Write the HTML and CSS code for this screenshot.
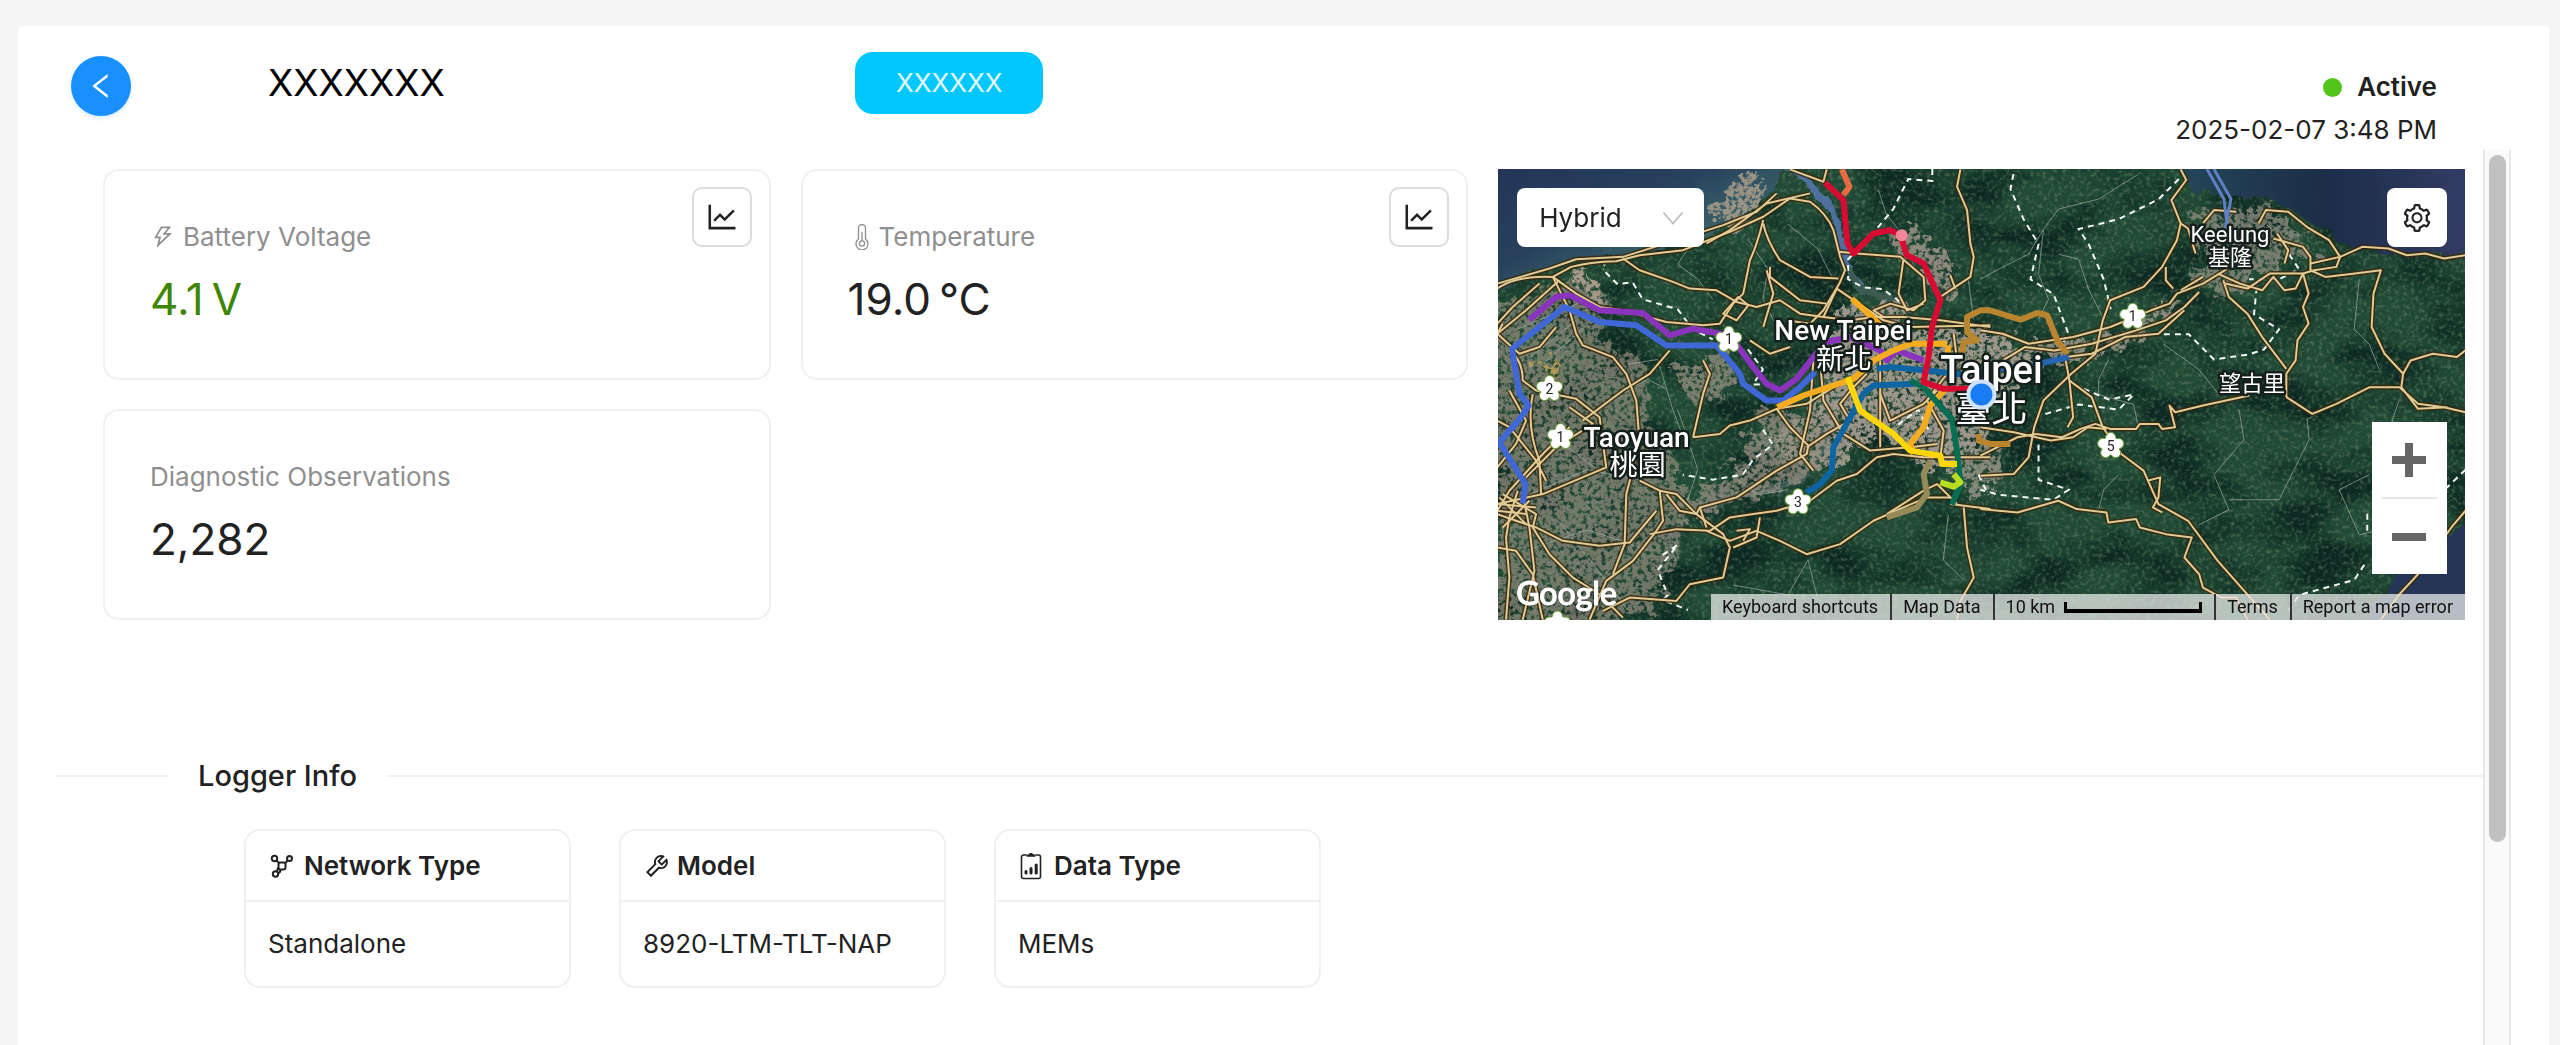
FILE: index.html
```html
<!DOCTYPE html>
<html lang="en">
<head>
<meta charset="utf-8">
<meta name="viewport" content="width=device-width, initial-scale=1">
<title>Logger details</title>
<link rel="stylesheet" href="styles.css">
</head>
<body>
<svg class="sprite" aria-hidden="true">
  <symbol id="i-left" viewBox="0 0 1024 1024"><path d="M724 218.3V141c0-6.7-7.7-10.4-12.9-6.3L260.3 486.8a31.86 31.86 0 000 50.3l450.8 352.1c5.3 4.1 12.9.4 12.9-6.3v-77.3c0-4.9-2.3-9.6-6.1-12.6l-360-281 360-281.1c3.8-3 6.1-7.7 6.1-12.6z"/></symbol>
  <symbol id="i-chart" viewBox="0 0 1024 1024"><path d="M888 792H200V168c0-4.4-3.6-8-8-8h-56c-4.4 0-8 3.6-8 8v688c0 4.4 3.6 8 8 8h752c4.4 0 8-3.6 8-8v-56c0-4.4-3.6-8-8-8zM305.8 637.7c3.1 3.1 8.1 3.1 11.3 0l138.3-137.6L583 628.5c3.1 3.1 8.2 3.1 11.3 0l275.4-275.3c3.1-3.1 3.1-8.2 0-11.3l-39.6-39.6a8.03 8.03 0 00-11.3 0l-230 229.9L461.4 404a8.03 8.03 0 00-11.3 0L266.3 586.7a8.03 8.03 0 000 11.3l39.5 39.7z"/></symbol>
  <symbol id="i-bolt" viewBox="0 0 1024 1024"><path d="M848 359.3H627.7L825.8 109c4.1-5.3.4-13-6.3-13H436c-2.8 0-5.5 1.5-6.9 4L170 547.5c-3.1 5.3.7 12 6.9 12h174.4l-89.4 357.6c-1.9 7.8 7.5 13.3 13.3 7.7L853.5 373c5.2-4.9 1.7-13.7-5.5-13.7zM378.2 732.5l60.3-241H281.1l189.6-327.4h224.6L487 427.4h211L378.2 732.5z"/></symbol>
  <symbol id="i-thermo" viewBox="0 0 16 26"><g fill="none" stroke="currentColor" stroke-width="1.3"><path d="M4.500 15V4a3.500 3.500 0 0 1 7 0v11a6 6 0 1 1-7 0z"/><circle cx="8" cy="19.500" r="2.600"/><path d="M8 17V8"/></g></symbol>
  <symbol id="i-gear" viewBox="0 0 1024 1024"><path d="M924.8 625.7l-65.5-56c3.1-19 4.700-38.400 4.700-57.800s-1.600-38.800-4.700-57.800l65.500-56a32.030 32.030 0 009.300-35.200l-.9-2.600a443.740 443.740 0 00-79.700-137.900l-1.800-2.100a32.120 32.120 0 00-35.100-9.500l-81.300 28.900c-30-24.600-63.500-44-99.700-57.600l-15.700-85a32.050 32.050 0 00-25.800-25.700l-2.700-.5c-52.100-9.400-106.900-9.400-159 0l-2.700.5a32.050 32.050 0 00-25.800 25.700l-15.800 85.400a351.860 351.860 0 00-99 57.400l-81.900-29.100a32 32 0 00-35.100 9.500l-1.800 2.100a446.020 446.020 0 00-79.700 137.900l-.9 2.600c-4.500 12.500-.8 26.500 9.300 35.200l66.300 56.600c-3.100 18.800-4.600 38-4.600 57.100 0 19.200 1.500 38.400 4.600 57.100L99 625.500a32.030 32.030 0 00-9.300 35.200l.9 2.600c18.100 50.400 44.900 96.900 79.700 137.900l1.800 2.100a32.120 32.120 0 0035.100 9.500l81.900-29.100c29.800 24.500 63.100 43.900 99 57.400l15.800 85.400a32.050 32.050 0 0025.800 25.700l2.700.5a449.400 449.400 0 00159 0l2.700-.5a32.050 32.050 0 0025.800-25.700l15.700-85a350 350 0 0099.700-57.600l81.300 28.900a32 32 0 0035.100-9.500l1.800-2.100c34.800-41.100 61.600-87.500 79.700-137.900l.9-2.600c4.500-12.300.8-26.300-9.300-35zM788.300 465.900c2.500 15.100 3.800 30.600 3.800 46.100s-1.300 31-3.800 46.100l-6.600 40.100 74.700 63.900a370.030 370.030 0 01-42.600 73.600L721 702.800l-31.400 25.800c-23.900 19.600-50.500 35-79.300 45.800l-38.100 14.300-17.900 97a377.500 377.500 0 01-85 0l-17.900-97.200-37.800-14.500c-28.500-10.800-55-26.200-78.700-45.700l-31.400-25.900-93.400 33.200c-17-22.900-31.200-47.600-42.600-73.600l75.500-64.500-6.500-40c-2.400-14.900-3.700-30.300-3.700-45.500 0-15.300 1.200-30.600 3.700-45.500l6.500-40-75.500-64.500c11.300-26.100 25.600-50.700 42.600-73.600l93.400 33.200 31.400-25.900c23.700-19.500 50.200-34.900 78.700-45.700l37.900-14.300 17.900-97.200c28.100-3.200 56.800-3.200 85 0l17.900 97 38.100 14.300c28.700 10.800 55.400 26.200 79.300 45.800l31.400 25.800 92.800-32.900c17 22.900 31.200 47.600 42.600 73.600L781.800 426l6.500 39.900zM512 326c-97.200 0-176 78.800-176 176s78.800 176 176 176 176-78.800 176-176-78.800-176-176-176zm79.200 255.200A111.600 111.600 0 01512 614c-29.900 0-58-11.700-79.200-32.800A111.600 111.600 0 01400 502c0-29.900 11.700-58 32.800-79.200C454 401.600 482.100 390 512 390c29.900 0 58 11.600 79.200 32.800A111.600 111.600 0 01624 502c0 29.900-11.700 58-32.800 79.200z"/></symbol>
  <symbol id="i-tool" viewBox="0 0 1024 1024"><path d="M876.600 239.500c-.5-.9-1.200-1.800-2-2.500-5-5-13.100-5-18.100 0L684.200 409.300l-67.900-67.900L788.700 169c.8-.8 1.400-1.600 2-2.500 3.600-6.100 1.600-13.900-4.500-17.500-98.200-58-226.800-44.700-311.300 39.700-67 67-89.200 162-66.500 247.400l-293 293c-3 3-2.800 7.900.3 11l169.700 169.700c3.100 3.100 8.100 3.300 11 .3l292.900-292.900c85.500 22.800 180.500.7 247.600-66.400 84.400-84.500 97.700-213.100 39.700-311.300zM786 499.800c-58.100 58.100-145.300 69.300-214.600 33.600l-8.800 8.800-.1-.1-274 274.100-79.200-79.200 230.100-230.100s0 .1.1.1l52.800-52.800c-35.700-69.300-24.500-156.500 33.600-214.600a184.200 184.200 0 01144-53.500L537 318.900a32.050 32.050 0 000 45.300l124.500 124.500a32.050 32.050 0 0045.300 0l132.800-132.800c3.700 51.800-14.400 104.800-53.600 143.900z"/></symbol>
  <symbol id="i-network" viewBox="0 0 24 24"><g fill="none" stroke="currentColor" stroke-width="2"><circle cx="4.500" cy="4.500" r="2.700"/><circle cx="19.500" cy="4.500" r="2.500"/><circle cx="5.500" cy="20" r="2.700"/><rect x="8.500" y="8.500" width="7" height="7" rx="2"/><path d="M6.500 6.500l2.500 2.500M17.700 6.500l-2.400 2.700M10.500 15.500c0 2.500-1 3.500-3 3.500M7 17.500l1-4"/></g></symbol>
  <symbol id="i-data" viewBox="0 0 22 28"><path d="M6.500 3H3.500A2 2 0 0 0 1.500 5v19.500a2 2 0 0 0 2 2h15a2 2 0 0 0 2-2V5a2 2 0 0 0-2-2h-3" fill="none" stroke="currentColor" stroke-width="1.600"/><path d="M6.500 4.800V2.500h2C9 .4 13 .4 13.500 2.500h2v2.300z"/><path d="M6 21v-1.500M11 21v-4.500M16.200 21v-8" fill="none" stroke="currentColor" stroke-width="3" stroke-linecap="round"/></symbol>
  <symbol id="i-down" viewBox="0 0 22 14"><path d="M1.500 1.500L11 12.500l9.500-11" fill="none" stroke="currentColor" stroke-width="1.800"/></symbol>
</svg>

<main class="panel">
  <header class="header">
    <button class="back" type="button" aria-label="Back"><svg><use href="#i-left"/></svg></button>
    <h1 class="title">XXXXXXX</h1>
    <span class="tag">XXXXXX</span>
    <div class="status">
      <div class="state"><span class="dot"></span>Active</div>
      <time class="stamp" datetime="2025-02-07T15:48">2025-02-07 3:48 PM</time>
    </div>
  </header>

  <div class="scroller">
    <div class="content">
      <section class="overview">
        <article class="stat">
          <div class="stat-text">
            <h2 class="stat-label"><svg class="bolt"><use href="#i-bolt"/></svg>Battery Voltage</h2>
            <p class="stat-value good">4.1<span class="unit">V</span></p>
          </div>
          <button class="chart-btn" type="button" aria-label="Battery voltage chart"><svg><use href="#i-chart"/></svg></button>
        </article>
        <article class="stat">
          <div class="stat-text">
            <h2 class="stat-label"><svg class="thermo"><use href="#i-thermo"/></svg>Temperature</h2>
            <p class="stat-value">19.0<span class="unit">°C</span></p>
          </div>
          <button class="chart-btn" type="button" aria-label="Temperature chart"><svg><use href="#i-chart"/></svg></button>
        </article>
        <article class="stat observations">
          <div class="stat-text">
            <h2 class="stat-label">Diagnostic Observations</h2>
            <p class="stat-value">2,282</p>
          </div>
        </article>

        <section class="map" aria-label="Map">
          <svg class="tiles" viewBox="0 0 966 450" preserveAspectRatio="xMidYMid slice">
            <defs>
              <linearGradient id="seaWest" x1="0" y1="0" x2="1" y2="1"><stop offset="0" stop-color="#243358"/><stop offset=".4" stop-color="#27405c"/><stop offset=".7" stop-color="#3d6a6c"/><stop offset="1" stop-color="#47756f"/></linearGradient>
              <linearGradient id="seaEast" x1="0" y1="0" x2="1" y2="0"><stop offset="0" stop-color="#25485a"/><stop offset=".5" stop-color="#1c2d48"/><stop offset="1" stop-color="#343c66"/></linearGradient>
              <filter id="ragged" x="-5%" y="-5%" width="110%" height="110%" color-interpolation-filters="sRGB"><feTurbulence type="fractalNoise" baseFrequency=".06" numOctaves="4" seed="4" result="n"/><feDisplacementMap in="SourceGraphic" in2="n" xChannelSelector="R" yChannelSelector="G" scale="40" result="d"/><feTurbulence type="fractalNoise" baseFrequency=".22" numOctaves="4" seed="9"/><feColorMatrix values="0 0 0 0 1  0 0 0 0 1  0 0 0 0 1  0 5 0 0 -1.600" result="m"/><feComposite in="d" in2="m" operator="in"/></filter>
              <filter id="shade" x="0" y="0" width="100%" height="100%" color-interpolation-filters="sRGB"><feTurbulence type="fractalNoise" baseFrequency=".014 .024" numOctaves="5" seed="12"/><feColorMatrix values="0 0 0 0 .03  0 0 0 0 .14  0 0 0 0 .12  3 0 0 0 -1.200"/></filter>
              <filter id="grain" x="0" y="0" width="100%" height="100%" color-interpolation-filters="sRGB"><feTurbulence type="fractalNoise" baseFrequency=".25" numOctaves="3" seed="2"/><feColorMatrix values="0 0 0 0 .5  0 0 0 0 .58  0 0 0 0 .46  0 2.500 0 0 -1.200"/></filter>
              <filter id="coast" x="-5%" y="-5%" width="110%" height="110%" color-interpolation-filters="sRGB"><feTurbulence type="fractalNoise" baseFrequency=".05" numOctaves="3" seed="7" result="n"/><feDisplacementMap in="SourceGraphic" in2="n" xChannelSelector="R" yChannelSelector="G" scale="14"/></filter>
              <g id="shield"><g class="petals"><circle cy="-8" r="5"/><circle cx="8" cy="-2" r="5"/><circle cx="5" cy="7" r="5"/><circle cx="-5" cy="7" r="5"/><circle cx="-8" cy="-2" r="5"/></g><circle class="core" r="9"/></g>
              <!-- highways and main roads: west half, then east half -->
              <g id="roads">
                <g transform="translate(-8 -9) scale(.33333)">
                  <path d="M24 385Q80 345 190 350L245 320Q300 305 380 303L450 285L580 270L720 215L820 170L900 115L960 125Q1010 160 1030 210L1050 290L1065 330L1048 370L1000 450L960 490L890 480"/>
                  <path d="M24 370L180 325L260 297L400 290L560 240L700 195L800 155L860 100M900 28L1000 65L1010 28M650 250L720 210L830 130L960 100"/>
                  <path d="M400 295L450 330L550 365L600 385L680 390L740 425L800 440L870 420L930 460L1000 470L1080 480L1150 470"/>
                  <path d="M820 180Q800 260 780 300L760 400L730 430L690 490L640 495L530 485L400 450L330 440L260 400L190 350"/>
                  <path d="M820 190Q830 240 870 300L960 350L1045 355M840 320L840 350L930 420L1010 430M830 330L850 400L820 500"/>
                  <path d="M1048 275L1100 280L1230 290L1300 350L1305 420L1270 450L1200 430L1150 450L1180 470M1240 295L1225 400L1250 450L1300 430"/>
                  <path d="M1000 470L1040 385L1180 480L1260 500L1500 495M1130 470L1240 470L1350 480L1500 500"/>
                  <path d="M1410 28L1400 80L1430 150L1440 250L1450 290L1440 350L1350 410M1380 345L1395 385"/>
                  <path d="M24 490L70 440L150 370M24 520L110 450L210 360M40 490L24 520L90 580L150 560L200 500"/>
                  <path d="M190 350L240 450L260 520L280 555L370 590L410 640L440 720L450 850L410 1000L405 1150L370 1240"/>
                  <path d="M60 570Q100 600 100 660L140 690L260 715L330 770L350 920L160 1000L24 1030"/>
                  <path d="M130 700Q110 800 150 900L155 1000M24 920L80 850L110 780L60 690M24 780L60 800L140 900L170 960"/>
                  <path d="M280 780L400 690L480 640L540 570M240 740L310 790L200 860L110 950"/>
                  <path d="M240 800L160 880L60 990L24 1050M24 1060L80 1080L140 1100L220 1140L330 1155L420 1145L500 1050"/>
                  <path d="M40 1000L140 1060L130 1100L180 1180L250 1250L330 1300L400 1370"/>
                  <path d="M85 990L60 1070L50 1130L60 1250L50 1376M100 1000L120 1100L135 1230L100 1376M24 1160L80 1170L130 1240L160 1376"/>
                  <path d="M24 1030L140 1040M24 1050L110 1060M30 1010L110 1090M40 1100L120 1020"/>
                  <path d="M450 960L510 990L520 1080L500 1110L430 1200L350 1260L300 1376"/>
                  <path d="M610 830L690 820L720 795L780 780L860 745L950 730L1030 680L1085 650"/>
                  <path d="M860 745L900 800L955 855L950 880L860 930L740 1010L630 1040L620 1060L570 1050L530 1000"/>
                  <path d="M510 990L560 1000L620 1060L700 1120L720 1160L700 1250L600 1270L560 1320L420 1310L340 1350"/>
                  <path d="M480 1120L560 1105L660 1110L720 1070L860 1050L960 1020L1040 960L1100 940L1160 890L1210 880L1300 890L1500 890"/>
                  <path d="M650 1110L720 1140L800 1110L870 1140L950 1180L1050 1150L1150 1080L1240 1040L1310 1010L1380 1010"/>
                  <path d="M630 1040L650 1100M810 1070L800 1130L730 1160M740 1110L780 1105L760 1140"/>
                  <path d="M950 860L1010 820L1080 780L1050 730L1090 680L1130 640M970 600L960 750L930 880L970 930"/>
                  <path d="M990 600L1000 720L1060 820L1140 870L1260 860L1340 850M1170 700L1200 780L1300 730L1340 690"/>
                  <path d="M1390 520L1400 600L1310 720L1360 810L1350 890M1170 600L1170 860"/>
                  <path d="M1380 1030L1500 1045M1420 1040L1430 1160L1450 1250L1410 1320L1400 1376M1400 1030L1340 970L1300 990L1190 1060"/>
                  <path d="M640 600L660 640L640 700L610 830M780 540L840 580L900 560M700 460L745 410L775 435L740 480Z"/>
                </g>
                <g transform="translate(482 -9) scale(.37 .33333)">
                  <path d="M540 28L555 60L515 120L540 190L530 240L490 320L440 380L350 420L330 480L310 580L245 640L170 720L145 800L130 890L90 940L0 945"/>
                  <path d="M0 510L60 520L130 550L250 530L350 500L460 450L510 430L530 400L600 370L660 330L680 310"/>
                  <path d="M60 600L120 560L200 570L300 550L420 510L500 480L550 440L590 395M230 590L300 580L390 530L480 520L550 450"/>
                  <path d="M540 190L560 205L580 280M600 190L630 150L690 155M750 190L770 150L830 155L880 200L940 240L970 290L960 320L900 330L870 340L780 340L720 385L660 370"/>
                  <path d="M800 220L830 270L820 310M790 235L870 260L890 290L890 330L930 350L1010 340L1080 330L1060 400L1055 500L1090 580L1140 640L1135 680"/>
                  <path d="M890 310L970 290L1030 260L1100 265L1150 285L1200 280L1250 295L1308 285"/>
                  <path d="M640 340L700 370L760 390L790 350L820 390L850 385L870 340L885 400L870 440L885 490L855 540L850 600L825 640L825 710"/>
                  <path d="M655 360L670 410L720 460L760 530L825 625M500 320L500 360L520 385M540 390L600 350"/>
                  <path d="M825 710L895 760L960 730L1050 680L1130 680L1180 730L1250 740L1308 755M1140 640L1160 600L1220 580L1285 590L1308 570M1135 680L1180 745L1260 740"/>
                  <path d="M725 705L600 735L525 755L510 735L525 800L490 805L480 790L430 790L420 805L350 805L310 790L270 805L220 830L150 820M240 660L300 710L330 800L380 880L440 930L480 1030L560 1080L640 1200L780 1376"/>
                  <path d="M230 600L240 660L250 770L235 800M0 800L90 815L190 840L250 830L290 800L340 805M150 820L100 830L0 885"/>
                  <path d="M0 1045L100 1055L210 1020L260 1045L340 1055L345 1085L420 1075L430 1100L500 1120L570 1130L550 1190L590 1240L600 1280L650 1310L690 1310L720 1376"/>
                  <path d="M450 960L485 950L480 1010L465 1040L490 1055M1308 1050L1270 1100L1180 1240L1130 1300L1080 1376"/>
                </g>
              </g>
            </defs>

            <rect width="966" height="450" fill="#204a35"/>
            <rect width="966" height="450" filter="url(#shade)" opacity=".85"/>
            <rect width="966" height="450" filter="url(#grain)" opacity=".5"/>

            <g filter="url(#coast)">
              <path d="M-10-10H286L275 20L240 50L205 70L140 85L90 90L40 100L-10 125Z" fill="url(#seaWest)"/>
              <path d="M670-10H976V85L900 85L860 80L815 55L790 40L760 28L700 22Z" fill="url(#seaEast)"/>
              <path d="M976 350L915 378L900 400L880 430L860 460H976Z" fill="#243557"/>
              <path d="M280-6L305 6L330 28L340 55L350 75L352 100L368 118L395 128L365 124L346 105L338 60L312 22Z" fill="#4f6f9d"/>
              <path d="M345 95L360 118L390 128L410 140M345 150Q350 210 330 250L320 290L290 315L240 325L190 345" fill="none" stroke="#3d5b52" stroke-width="7"/>
            </g>

            <g filter="url(#ragged)">
              <path d="M0 135L70 110L110 120L100 170L150 195L150 260L175 290L190 330L180 390L150 440L100 460H0Z" fill="#8f8a7b" opacity=".75"/>
              <path d="M80 95L110 115L100 135L80 125Z" fill="#a69889"/>
              <path d="M170 200L230 180L240 210L200 240Z" fill="#9a9182" opacity=".75"/>
              <path d="M340 140L400 130L410 160L500 165L545 175L530 200L490 240L480 290L430 310L390 260L350 290L310 300L270 270L320 230Z" fill="#aaa093" opacity=".9"/>
              <path d="M400 55L430 65L455 95L450 130L425 110L400 85Z" fill="#a8998f" opacity=".8"/>
              <path d="M260 240L330 240L345 275L300 310L240 330L200 350L170 340L240 300Z" fill="#938c80" opacity=".8"/>
              <path d="M222 20L250 10L270 18L250 45L230 60L215 50Z" fill="#a59a87" opacity=".9"/>
              <path d="M540 175L620 165L660 140L680 120L665 155L610 180L560 195Z" fill="#9c9587" opacity=".9"/>
              <path d="M700 45L740 40L770 35L800 60L820 90L780 95L740 120L700 125Z" fill="#948f83" opacity=".75"/>
              <path d="M440 290L500 280L515 305L470 320Z" fill="#a0988c" opacity=".8"/>
              <path d="M35 190L60 190L55 205L35 200Z" fill="#b49a57"/>
            </g>

            <g class="minor">
              <path d="M180 60L190 80L180 95L200 110L215 130M250 70L270 100L265 130L280 160M290 55L320 80L335 110M380 20L388 45L400 60M470 110L475 150M20 160L90 130M30 190L80 150M45 195L90 155M130 195L160 190L175 240L190 280M110 230L150 210L170 220M60 270L100 300L130 300M20 330L90 300L140 310M30 380L90 360L150 380M60 350L100 400L130 440M180 240L200 300L190 330M235 415L290 425L310 390L320 430M450 345L445 390L465 410M240 310L260 325L290 320"/>
              <path d="M640 5L600 30L560 40L545 60L530 85L500 100L482 110M545 60L540 105L550 130L540 150M560 85L580 90L590 120L605 150M610 190L600 210L600 225L635 235L640 260M665 175L700 200L720 225M740 240L745 270L715 305L730 340L700 355M730 330L780 330L800 290L810 270L808 250L825 240M860 110L855 160L870 175L880 200M620 305L605 320L600 340M870 305L840 320L860 365L880 360M900 230L890 260"/>
            </g>
            <g class="border">
              <path d="M108 103L120 115L135 113L145 130L180 140L195 160L215 170M434 0L434 12L410 10L395 40L370 70L350 90L350 110L365 118L385 120L405 135M250 180L265 200L255 215L270 215M265 260L275 275L255 290L245 305L215 310L185 305M165 385L180 375L160 400L170 425L165 430L190 440M400 255L420 240L430 260M480 305L490 325"/>
              <path d="M515 5L512 20L525 50L540 75L532 110L555 125L570 165L560 180M680 10L660 30L620 50L580 60L590 75L605 110L612 140M665 165L690 165L715 190L750 185L765 180L780 160L755 145L758 115M790 85L800 100L780 110L750 110M575 215L610 230L635 225L620 240L580 235L545 245M540 275L540 310L570 320L555 330L500 325L482 320M966 300L940 325L868 345L868 365M865 395L855 410L800 425L790 440"/>
            </g>

            <use href="#roads" class="road-case"/>
            <use href="#roads" class="road-fill"/>

            <!-- metro lines -->
            <g class="metro" transform="translate(-8 -9) scale(.33333)">
              <path stroke="#8a34bd" d="M120 478L200 410L240 405L330 450L460 458L540 525L610 505L720 525L790 620L830 670L870 690L920 655L970 590L1010 545L1080 530L1170 570L1190 600L1220 570L1300 600"/>
              <path stroke="#3f68d6" d="M100 1028L108 970L30 845L95 770L118 735L90 700L68 565L225 440L330 485L440 495L530 555L680 555L750 640L760 670L830 720L880 720L930 680L975 635"/>
              <path stroke="#f6ac20" d="M862 740L940 705L1090 655L1150 600L1210 570L1260 550L1370 550M1085 415L1145 470L1175 500M1375 555L1370 600M1370 680L1320 735L1300 800L1260 850L1270 880"/>
              <path stroke="#0f65a4" d="M950 995L990 970L1025 930L1030 860L1075 780L1120 700L1150 675L1270 670M1160 625L1200 620L1310 630L1440 645"/>
              <path stroke="#086e52" d="M1260 660L1300 680L1385 775L1400 870L1410 970L1385 1032"/>
              <path stroke="#d80c32" stroke-width="6" d="M1005 68L1060 120L1072 250L1090 280L1150 220L1200 210L1230 225L1250 285L1300 310L1350 420L1325 500L1315 590L1300 665L1360 685L1450 685"/>
              <path stroke="#e96b41" d="M1055 28L1078 80L1060 105"/>
              <path stroke="#fdd60a" d="M1072 650L1110 750L1210 820L1260 870L1350 885L1355 910L1400 910"/>
              <path stroke="#b9dd21" d="M1350 965L1390 978L1410 965L1390 940"/>
              <path stroke="#968a58" d="M1320 900L1300 940L1310 1000L1280 1040L1190 1070"/>
              <path stroke="#b9852e" d="M1415 580L1420 545L1460 540L1430 515L1430 470L1470 450L1498 450L1590 478L1640 458L1670 465L1700 540L1730 580M1465 820L1465 840L1500 850L1560 850"/>
              <circle cx="1234" cy="225" r="18" fill="#f2879a" stroke="none"/>
              <path stroke="#2764b0" d="M1450 640L1560 620L1600 620L1735 590"/>
            </g>
            <path d="M708 0L725 30L728 55M715 0L732 30L726 60" fill="none" stroke="#6180c1" stroke-width="3"/>

            <g class="shields">
              <g transform="translate(231 170)"><use href="#shield"/><text y="5">1</text></g>
              <g transform="translate(52 219)"><use href="#shield"/><text y="5">2</text></g>
              <g transform="translate(63 267)"><use href="#shield"/><text y="5">1</text></g>
              <g transform="translate(300 332)"><use href="#shield"/><text y="5">3</text></g>
              <g transform="translate(634 147)"><use href="#shield"/><text y="5">1</text></g>
              <g transform="translate(612 276)"><use href="#shield"/><text y="5">5</text></g>
              <g transform="translate(60 454)"><use href="#shield"/></g>
            </g>

            <g class="places">
              <text class="city" x="345" y="171">New Taipei</text>
              <text class="city-zh" x="346" y="200">新北</text>
              <text class="city" x="139" y="277">Taoyuan</text>
              <text class="city-zh" x="140" y="305">桃園</text>
              <text class="capital" x="493" y="214">Taipei</text>
              <text class="capital-zh" x="493" y="252">臺北</text>
              <text class="town" x="731" y="73">Keelung</text>
              <text class="town-zh" x="731" y="96">基隆</text>
              <text class="town-zh" x="753" y="222">望古里</text>
            </g>
            <circle cx="483" cy="225" r="13" fill="#1a7cf5" stroke="#cfe2fb" stroke-width="4"/>
          </svg>

          <div class="map-ui">
            <div class="map-top">
              <label class="map-type">
                <select aria-label="Map type"><option>Hybrid</option><option>Roadmap</option><option>Satellite</option></select>
                <svg><use href="#i-down"/></svg>
              </label>
              <button class="map-settings" type="button" aria-label="Map settings"><svg><use href="#i-gear"/></svg></button>
            </div>
            <div class="zoom">
              <button type="button" aria-label="Zoom in"><svg viewBox="0 0 34 34"><path d="M13 0h8v13h13v8H21v13h-8V21H0v-8h13z"/></svg></button>
              <hr>
              <button type="button" aria-label="Zoom out"><svg viewBox="0 0 34 34"><path d="M0 13h34v8H0z"/></svg></button>
            </div>
            <div class="map-foot">
              <span class="brand">Google</span>
              <div class="credits">
                <button type="button">Keyboard shortcuts</button>
                <button type="button">Map Data</button>
                <span class="scale">10 km<i></i></span>
                <a href="#terms">Terms</a>
                <a href="#report">Report a map error</a>
              </div>
            </div>
          </div>
        </section>
      </section>

      <h2 class="divider">Logger Info</h2>
      <section class="info">
        <article class="info-card">
          <h3><svg class="network"><use href="#i-network"/></svg>Network Type</h3>
          <p>Standalone</p>
        </article>
        <article class="info-card">
          <h3><svg class="tool"><use href="#i-tool"/></svg>Model</h3>
          <p>8920-LTM-TLT-NAP</p>
        </article>
        <article class="info-card">
          <h3><svg class="data"><use href="#i-data"/></svg>Data Type</h3>
          <p>MEMs</p>
        </article>
      </section>
    </div>
    <div class="track"><div class="thumb"></div></div>
  </div>
</main>
</body>
</html>
```
FILE: styles.css
```css
* { box-sizing: border-box; }

body {
  margin: 0;
  padding: 26px 11px 0 18px;
  min-height: 100vh;
  display: flex;
  background: #f5f5f5;
  color: #222;
  font: 400 26px/40px Inter, "Liberation Sans", sans-serif;
}

h1, h2, h3, p { margin: 0; font-size: inherit; font-weight: inherit; }
button, select { font: inherit; color: inherit; padding: 0; border: 0; cursor: pointer; }
svg { display: block; fill: currentColor; flex: none; }
.sprite { position: absolute; width: 0; height: 0; }

.panel {
  flex: 1;
  min-width: 0;
  display: flex;
  flex-direction: column;
  background: #fff;
  border-radius: 4px 4px 0 0;
}

/* header */
.header {
  display: grid;
  grid-template-columns: 197px 587px auto 1fr;
  align-items: start;
  height: 124px;
  padding: 26px 112px 0 53px;
}
.back {
  display: grid;
  place-items: center;
  width: 60px;
  height: 60px;
  margin-top: 4px;
  border-radius: 50%;
  background: #1890ff;
  color: #fff;
  box-shadow: 0 2px 4px #1890ff30;
}
.back svg { width: 32px; height: 32px; }
.title { color: #000; font-size: 37px; line-height: 62px; }
.tag {
  padding: 0 41px;
  border-radius: 18px;
  background: #00c8ff;
  color: #e6f9ff;
  line-height: 62px;
}
.status { text-align: right; padding-top: 15px; }
.state {
  display: flex;
  justify-content: flex-end;
  align-items: center;
  gap: 15px;
  font-weight: 600;
}
.dot { width: 19px; height: 19px; border-radius: 50%; background: #52c41a; }
.stamp { display: block; margin-top: 3px; }

/* scrolling body */
.scroller { flex: 1; display: flex; padding-right: 38px; }
.content { flex: 1; min-width: 0; padding: 19px 0 56px 38px; }
.track {
  width: 28px;
  padding: 5px 0;
  border: solid #e8e8e8;
  border-width: 0 2px;
  background: #fafafa;
}
.thumb { width: 17px; height: 687px; margin: 0 auto; border-radius: 9px; background: #c1c1c1; }

.overview {
  display: grid;
  grid-template-columns: 667fr 667fr 966fr;
  grid-auto-rows: 211px;
  gap: 29px 30px;
  padding: 0 18px 0 47px;
}
.stat {
  display: flex;
  justify-content: space-between;
  align-items: flex-start;
  padding: 16px 17px 18px 45px;
  border: 2px solid #f0f0f0;
  border-radius: 16px;
}
.stat-text { padding-top: 30px; }
.stat-label { display: flex; align-items: center; color: #8f8f8f; }
.bolt { width: 26px; height: 26px; margin-right: 7px; }
.thermo { width: 16px; height: 26px; margin: 0 9px 0 6px; }
.stat-value { margin-top: 14px; font-size: 44px; line-height: 56px; }
.good { color: #3f8600; }
.unit { margin-left: 8px; }
.chart-btn {
  display: grid;
  place-items: center;
  width: 60px;
  height: 60px;
  border: 2px solid #dcdcdc;
  border-radius: 10px;
  background: #fff;
}
.chart-btn svg { width: 36px; height: 36px; }
.observations { grid-column: 1; }

/* map */
.map {
  position: relative;
  grid-column: 3;
  grid-row: 1 / span 2;
  overflow: hidden;
  background: #204a35;
}
.tiles { position: absolute; inset: 0; width: 100%; height: 100%; }
.road-case, .road-fill { fill: none; stroke-linejoin: round; }
.road-case { stroke: #38260c; stroke-width: 5px; opacity: .8; }
.road-fill { stroke: #e2cb94; stroke-width: 2px; }
.tiles path { vector-effect: non-scaling-stroke; }
.metro { fill: none; stroke-width: 6px; stroke-linejoin: round; }
.minor { fill: none; stroke: #a9b4ad; stroke-width: 1px; opacity: .65; }
.border { fill: none; stroke: #f2f7f3; stroke-width: 2px; stroke-dasharray: 6 5; }
.petals, .core { fill: #fff; }
.petals { stroke: #6f9f3c; stroke-width: 1px; }
.shields text { font: 400 14px Roboto, sans-serif; fill: #222; text-anchor: middle; }
.places {
  font-family: Roboto, "Noto Sans CJK TC", sans-serif;
  text-anchor: middle;
  fill: #fff;
  stroke: #15201c;
  stroke-width: 5px;
  stroke-linejoin: round;
  paint-order: stroke;
}
.city { font-size: 28px; font-weight: 500; }
.city-zh { font-size: 28px; }
.capital { font-size: 38px; font-weight: 500; }
.capital-zh { font-size: 36px; }
.town { font-size: 22px; }
.town-zh { font-size: 22px; }

.map-ui { position: relative; height: 100%; display: flex; flex-direction: column; }
.map-top { display: flex; justify-content: space-between; padding: 19px 18px 0 19px; }
.map-type { position: relative; display: block; }
.map-type select {
  appearance: none;
  width: 187px;
  height: 59px;
  padding: 0 48px 0 22px;
  border-radius: 8px;
  background: #fff;
}
.map-type svg { position: absolute; right: 20px; top: 23px; width: 22px; height: 14px; color: #bfbfbf; pointer-events: none; }
.map-settings { display: grid; place-items: center; width: 60px; height: 59px; border-radius: 8px; background: #fff; }
.map-settings svg { width: 32px; height: 32px; }
.zoom { width: 75px; margin: auto 18px 20px auto; background: #fff; color: #666; }
.zoom button { display: grid; place-items: center; width: 100%; height: 75px; background: none; }
.zoom svg { width: 34px; height: 34px; }
.zoom hr { margin: 0 10px; border: 0; border-top: 2px solid #e6e6e6; }
.map-foot { display: flex; justify-content: space-between; align-items: flex-end; height: 26px; }
.brand {
  padding: 0 0 5px 18px;
  font: 500 32px/44px Lato, sans-serif;
  color: #fff;
  -webkit-text-stroke: 1px #fff;
  text-shadow: 0 0 3px #000a;
}
.credits { display: flex; font: 400 18px/26px Roboto, sans-serif; color: #111; }
.credits > * { height: 26px; padding: 0 12px 0 11px; background: #e4e6e5c4; color: inherit; text-decoration: none; }
.credits > * + * { border-left: 2px solid #333; }
.scale { display: flex; align-items: center; gap: 9px; }
.scale i { width: 138px; height: 11px; border: solid #000; border-width: 0 3px 4px; }

/* logger info */
.divider {
  display: flex;
  align-items: center;
  gap: 30px;
  margin-top: 132px;
  font-size: 29px;
  font-weight: 500;
  line-height: 48px;
}
.divider::before, .divider::after { content: ""; height: 2px; background: #f2f2f2; }
.divider::before { width: 112px; }
.divider::after { flex: 1; }
.info {
  display: grid;
  grid-template-columns: repeat(3, minmax(0, 327px));
  gap: 48px;
  padding: 29px 0 0 188px;
}
.info-card { border: 2px solid #f0f0f0; border-radius: 16px; }
.info-card h3 {
  display: flex;
  align-items: center;
  padding: 15px 22px 14px;
  border-bottom: 2px solid #f0f0f0;
  font-weight: 600;
}
.info-card p { padding: 22px 22px 22px; }
.network { width: 24px; height: 24px; margin: 0 10px 0 2px; }
.tool { width: 28px; height: 28px; margin-right: 6px; }
.data { width: 22px; height: 28px; margin: 0 12px 0 2px; }
```
